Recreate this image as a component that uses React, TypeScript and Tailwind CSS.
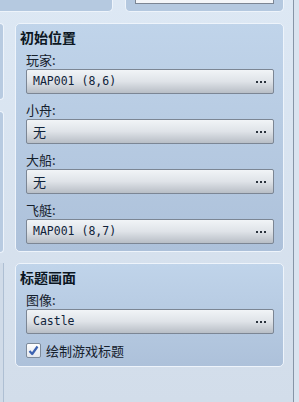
const sans = "font-['Noto_Sans_CJK_SC','Noto_Sans',sans-serif]";
const mono = "font-['DejaVu_Sans_Mono','Noto_Sans_CJK_SC',monospace]";

function Dots() {
  return (
    <div className="flex gap-[2px]">
      <span className="w-[2px] h-[2px] bg-[#2a323c]" />
      <span className="w-[2px] h-[2px] bg-[#2a323c]" />
      <span className="w-[2px] h-[2px] bg-[#2a323c]" />
    </div>
  );
}

interface FieldProps {
  label: string;
  value: string;
  monoText?: boolean;
}

function Field({ label, value, monoText }: FieldProps) {
  return (
    <div>
      <div className={`pl-[10px] pt-[9px] h-[25px] text-[13px] leading-[14px] text-[#15202c] ${sans}`}>
        {label}
      </div>
      <div className="ml-[10px] mr-[9px] h-[25px] flex items-center justify-between pl-[6px] pr-[7px] rounded-[2px] border border-[#7c8694] bg-gradient-to-b from-[#f1f4f7] via-[#dfe3e8] to-[#b8bec6]">
        <span
          className={`${monoText ? `${mono} text-[11.5px]` : `${sans} text-[13px]`} leading-none text-[#10233a]`}
        >
          {value}
        </span>
        <Dots />
      </div>
    </div>
  );
}

function Group({ title, children }: { title: string; children: React.ReactNode }) {
  return (
    <div className="rounded-[5px] border border-[#eef4fb] bg-gradient-to-b from-[#c0d4ea] to-[#adc1da]">
      <div className={`pl-[4px] pt-[6px] h-[20px] text-[14px] leading-[14px] font-bold text-[#0c1622] ${sans}`}>
        {title}
      </div>
      {children}
    </div>
  );
}

export default function App() {
  return (
    <div className="w-[299px] h-[402px] overflow-hidden flex bg-gradient-to-b from-[#dde8f4] to-[#d2ddea]">
      <div className="w-[293px] flex flex-col">
        {/* top bar pieces */}
        <div className="h-[12px] flex">
          <div className="w-[113px] rounded-br-[5px] bg-[#b5c9e0] border-r border-b border-[#eef4fb]" />
          <div className="ml-[12px] w-[159px] rounded-b-[5px] bg-[#b5c9e0] border-x border-b border-[#eef4fb]">
            <div className="ml-[9px] mr-[9px] h-[4px] bg-[#f4f6f9] border-x border-b border-[#7c8694]" />
          </div>
        </div>

        <div className="mt-[11px] flex flex-1">
          {/* left strip */}
          <div className="w-[4px] flex flex-col">
            <div className="h-[77px] rounded-r-[4px] bg-[#b8cbe1] border-r border-y border-[#eef4fb]" />
            <div className="mt-[11px] h-[142px] rounded-r-[4px] bg-[#b8cbe1] border-r border-y border-[#eef4fb]" />
            <div className="mt-[10px] flex-1 bg-[#d0dbe8] border-r border-[#aebfd3]" />
          </div>

          {/* main column */}
          <div className="ml-[11px] w-[269px] flex flex-col gap-[11px]">
            <Group title="初始位置">
              <div className="pb-[7px]">
                <Field label="玩家:" value="MAP001 (8,6)" monoText />
                <Field label="小舟:" value="无" />
                <Field label="大船:" value="无" />
                <Field label="飞艇:" value="MAP001 (8,7)" monoText />
              </div>
            </Group>

            <Group title="标题画面">
              <Field label="图像:" value="Castle" monoText />
              <div className="pl-[10px] pt-[9px] pb-[8px] flex items-center gap-[5px]">
                <div className="w-[15px] h-[15px] rounded-[2px] border border-[#7d8a9a] bg-gradient-to-b from-[#ffffff] to-[#e4e8ee] flex items-center justify-center">
                  <svg width="11" height="11" viewBox="0 0 11 11">
                    <path d="M1.5 6 L4.2 9 L9.5 1.5" fill="none" stroke="#3c62b0" strokeWidth="2.2" strokeLinejoin="round" />
                  </svg>
                </div>
                <span className={`text-[13px] leading-[14px] text-[#15202c] ${sans}`}>绘制游戏标题</span>
              </div>
            </Group>
          </div>
        </div>
      </div>
      <div className="w-px h-full bg-[#8795a7]" />
      <div className="flex-1 bg-[#d9e3ef]" />
    </div>
  );
}
